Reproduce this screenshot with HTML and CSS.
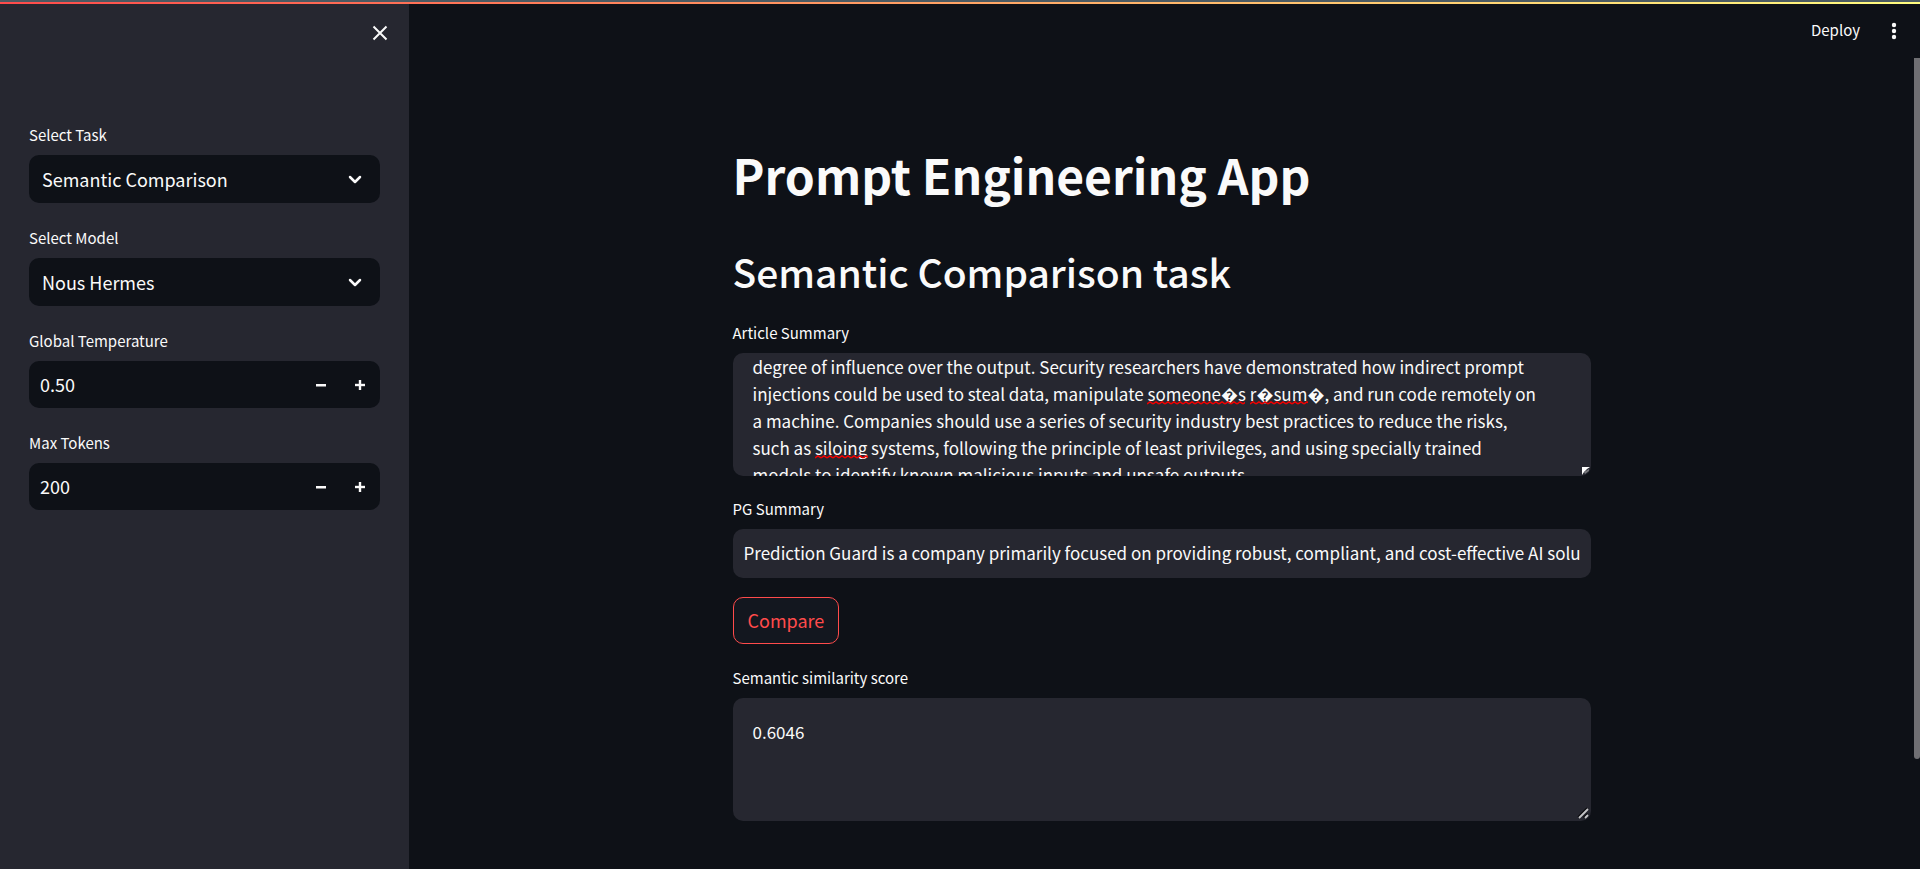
FILE: index.html
```html
<!DOCTYPE html>
<html lang="en">
<head>
<meta charset="utf-8">
<title>Prompt Engineering App</title>
<link rel="stylesheet" href="styles.css">
</head>
<body>
<div class="decoration"></div>
<div class="app">
  <aside class="sidebar">
    <div class="sidebar-top">
      <button class="icon-button" type="button" aria-label="Close sidebar">
        <svg width="20" height="20" viewBox="0 0 20 20" fill="none" stroke="currentColor" stroke-width="2"><path d="M3.5 3.5l13 13M16.500 3.500l-13 13"/></svg>
      </button>
    </div>
    <form class="settings">
      <div class="field">
        <label for="task">Select Task</label>
        <div class="select-box">
          <select id="task"><option>Semantic Comparison</option></select>
          <svg class="chevron" width="14" height="10" viewBox="0 0 14 10" fill="none" stroke="currentColor" stroke-width="2.500" stroke-linecap="round" stroke-linejoin="round"><path d="M2 2l5 5 5-5"/></svg>
        </div>
      </div>
      <div class="field">
        <label for="model">Select Model</label>
        <div class="select-box">
          <select id="model"><option>Nous Hermes</option></select>
          <svg class="chevron" width="14" height="10" viewBox="0 0 14 10" fill="none" stroke="currentColor" stroke-width="2.500" stroke-linecap="round" stroke-linejoin="round"><path d="M2 2l5 5 5-5"/></svg>
        </div>
      </div>
      <div class="field">
        <label for="temperature">Global Temperature</label>
        <div class="number-box">
          <input id="temperature" type="number" step="0.01" value="0.50">
          <button class="step" type="button" aria-label="Decrease temperature"><svg width="10" height="10" viewBox="0 0 10 10"><path d="M0 4h10v2.500H0z" fill="currentColor"/></svg></button>
          <button class="step" type="button" aria-label="Increase temperature"><svg width="10" height="10" viewBox="0 0 10 10"><path d="M0 4h4V0h2v4h4v2H6v4H4V6H0z" fill="currentColor" stroke="currentColor" stroke-width=".4"/></svg></button>
        </div>
      </div>
      <div class="field">
        <label for="tokens">Max Tokens</label>
        <div class="number-box">
          <input id="tokens" type="number" value="200">
          <button class="step" type="button" aria-label="Decrease tokens"><svg width="10" height="10" viewBox="0 0 10 10"><path d="M0 4h10v2.500H0z" fill="currentColor"/></svg></button>
          <button class="step" type="button" aria-label="Increase tokens"><svg width="10" height="10" viewBox="0 0 10 10"><path d="M0 4h4V0h2v4h4v2H6v4H4V6H0z" fill="currentColor" stroke="currentColor" stroke-width=".4"/></svg></button>
        </div>
      </div>
    </form>
  </aside>
  <div class="view">
    <header class="toolbar">
      <button class="deploy" type="button">Deploy</button>
      <button class="icon-button" type="button" aria-label="Main menu">
        <svg width="20" height="20" viewBox="0 0 20 20" fill="currentColor"><circle cx="10" cy="4" r="2.200"/><circle cx="10" cy="10" r="2.200"/><circle cx="10" cy="16" r="2.200"/></svg>
      </button>
    </header>
    <main class="content">
      <h1>Prompt Engineering App</h1>
      <h2>Semantic Comparison task</h2>
      <div class="field">
        <label for="article">Article Summary</label>
        <div class="area-box">
          <textarea id="article" class="scrolled">degree of influence over the output. Security researchers have demonstrated how indirect prompt
injections could be used to steal data, manipulate someone�s r�sum�, and run code remotely on
a machine. Companies should use a series of security industry best practices to reduce the risks,
such as siloing systems, following the principle of least privileges, and using specially trained
models to identify known malicious inputs and unsafe outputs.</textarea>
          <span class="misspelt someone"></span>
          <span class="misspelt resume"></span>
          <span class="misspelt siloing"></span>
          <svg class="grip corner" width="8" height="8" viewBox="0 0 8 8"><path d="M0 0h8L5 2 2 5 0 8z" fill="#fff"/><path d="M2 5l5-3v2L3 7z" fill="#77787d"/></svg>
        </div>
      </div>
      <div class="field">
        <label for="summary">PG Summary</label>
        <input id="summary" class="text-input" type="text" value="Prediction Guard is a company primarily focused on providing robust, compliant, and cost-effective AI solutions">
      </div>
      <button class="compare" type="button">Compare</button>
      <div class="field">
        <label for="score">Semantic similarity score</label>
        <div class="area-box">
          <textarea id="score">0.6046</textarea>
          <svg class="grip" width="12" height="12" viewBox="0 0 12 12" fill="none"><path d="M1 10l9-9M6.500 10.500l4-4" stroke="#08090c" stroke-width="1.500"/><path d="M2 11l9-9M8 11l3-3" stroke="#c4c4c6" stroke-width="1.800"/></svg>
        </div>
      </div>
    </main>
    <div class="scroll-thumb"></div>
  </div>
</div>
</body>
</html>
```
FILE: styles.css
```css
* { box-sizing: border-box; }
body {
  margin: 0;
  display: flex;
  flex-direction: column;
  min-height: 100vh;
  background: #0e1117;
  color: #fafafa;
  font-family: "Noto Sans CJK SC", "Noto Sans", sans-serif;
  font-size: 18px;
}
button, input, select, textarea {
  margin: 0;
  border: 0;
  background: none;
  color: inherit;
  font: inherit;
}
button {
  display: flex;
  align-items: center;
  justify-content: center;
  padding: 0;
}
h1, h2 { margin: 0; }
h1 { font-size: 48px; line-height: 64px; font-weight: 700; }
h2 { font-size: 39px; line-height: 52px; font-weight: 500; margin: 39px 0 24px; }
svg { display: block; }
.decoration {
  height: 4px;
  border-top: 2px solid #4b5a62;
  background: linear-gradient(90deg, #ff4b4b, #fffd80);
}
.app { display: flex; flex: 1; }
.sidebar { width: 409px; background: #262730; }
.sidebar-top {
  display: flex;
  justify-content: flex-end;
  padding: 19px 19px 0 0;
}
.icon-button { width: 20px; height: 20px; }
.settings {
  display: flex;
  flex-direction: column;
  gap: 23px;
  padding: 80px 29px 0;
}
label { display: block; font-size: 15px; line-height: 24px; margin-bottom: 8px; }
.select-box { position: relative; }
select {
  appearance: none;
  width: 100%;
  height: 48px;
  padding: 0 13px;
  border-radius: 10px;
  background: #0e1117;
}
.chevron { position: absolute; right: 18px; top: 20px; pointer-events: none; }
.number-box {
  display: flex;
  height: 47px;
  padding-right: 1px;
  border-radius: 10px;
  background: #0e1117;
}
.number-box input {
  flex: 1;
  min-width: 0;
  padding: 0 11px 2px;
  appearance: textfield;
}
.step { width: 39px; }
.view { position: relative; flex: 1; padding-right: 6px; }
.toolbar {
  display: flex;
  align-items: center;
  justify-content: flex-end;
  gap: 24px;
  height: 54px;
  padding-right: 10px;
}
.deploy { font-size: 15px; padding-bottom: 3px; }
.content { max-width: 858px; margin: 0 auto; padding: 84px 0 40px; }
.content .text-input, textarea { font-size: 17px; }
.area-box { position: relative; }
textarea {
  display: block;
  width: 100%;
  height: 123px;
  padding: 20px;
  border-radius: 10px;
  background: #262730;
  line-height: 27px;
  resize: none;
  overflow: hidden;
}
textarea.scrolled { padding-top: 0; padding-bottom: 0; }
.misspelt {
  position: absolute;
  height: 4px;
  pointer-events: none;
  background: url("data:image/svg+xml,%3Csvg xmlns='http://www.w3.org/2000/svg' width='6' height='4'%3E%3Cpath d='M0 3L3 1L6 3' fill='none' stroke='%23f00000' stroke-width='1.500'/%3E%3C/svg%3E") repeat-x;
}
.someone { left: 414px; top: 48px; width: 98px; }
.resume { left: 517px; top: 48px; width: 58px; }
.siloing { left: 82px; top: 102px; width: 53px; }
.grip { position: absolute; right: 2px; bottom: 2px; pointer-events: none; }
.corner { right: 1px; bottom: 1px; }
.field + .field { margin-top: 21px; }
.settings .field + .field { margin-top: 0; }
.text-input {
  display: block;
  width: 100%;
  height: 49px;
  padding: 0 11px 2px;
  border-radius: 10px;
  background: #262730;
}
.compare {
  height: 47px;
  margin: 19px 0 22px;
  padding: 0 14px 2px;
  border: 1px solid #ff4b4b;
  border-radius: 10px;
  background: #13171f;
  color: #ff4b4b;
}
.scroll-thumb {
  position: absolute;
  top: 54px;
  right: 0;
  width: 6px;
  height: 81%;
  border-radius: 0 0 3px 3px;
  background: #6f6f73;
}
```
